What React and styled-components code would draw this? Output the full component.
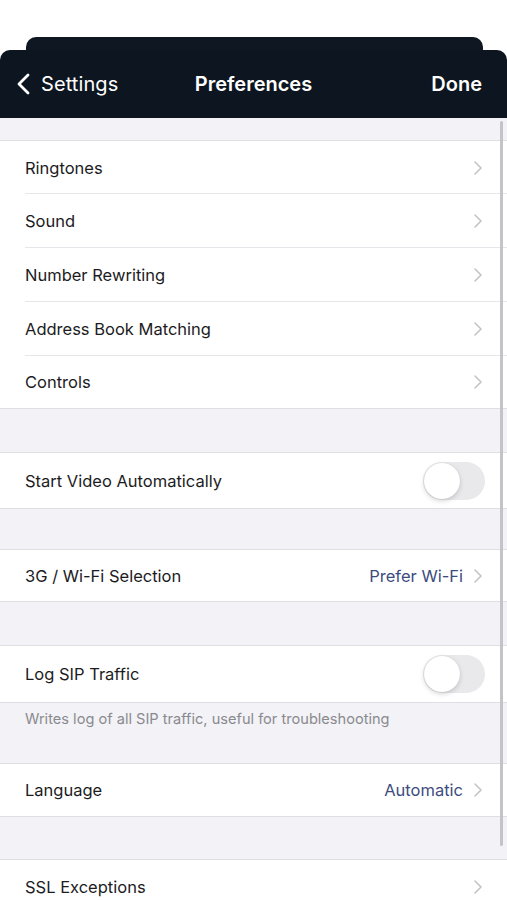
import React from 'react';
import styled, { createGlobalStyle } from 'styled-components';

const GlobalStyle = createGlobalStyle`
  html, body {
    margin: 0;
    padding: 0;
    background: #ffffff;
    font-family: Inter, "Noto Sans", sans-serif;
    -webkit-font-smoothing: antialiased;
  }
`;

const Screen = styled.div`
  position: relative;
  width: 507px;
  height: 900px;
  overflow: hidden;
  padding-top: 37px;
  box-sizing: border-box;
  background: #ffffff;
`;

const BackCard = styled.div`
  height: 13px;
  margin: 0 24px 0 26px;
  background: #0f1822;
  border-radius: 10px 10px 0 0;
`;

const Sheet = styled.div`
  background: #f2f2f7;
  border-radius: 10px 10px 0 0;
  overflow: hidden;
  height: 863px;
`;

const NavBar = styled.header`
  height: 68px;
  background: #0d1620;
  display: grid;
  grid-template-columns: 1fr auto 1fr;
  align-items: center;
  padding: 0 25px;
  color: #ffffff;
  font-size: 20px;
`;

const BackButton = styled.div`
  display: flex;
  align-items: center;
  gap: 11px;
  margin-left: -8px;
  letter-spacing: 0.1px;
`;

const Title = styled.div`
  font-weight: 600;
`;

const DoneButton = styled.div`
  justify-self: end;
  font-weight: 600;
`;

const Content = styled.div`
  padding-top: 22px;
`;

const Group = styled.div`
  background: #ffffff;
  border-top: 1px solid #dedee3;
  border-bottom: 1px solid #dedee3;
  margin-bottom: ${(p) => p.$gap ?? 43}px;
`;

const Row = styled.div`
  display: flex;
  align-items: center;
  height: ${(p) => p.$h || 53}px;
  padding-left: 25px;
  position: relative;
  &:not(:last-child)::after {
    content: '';
    position: absolute;
    left: 25px;
    right: 0;
    bottom: 0;
    height: 1px;
    background: #e5e5ea;
  }
`;

const Label = styled.div`
  flex: 1;
  font-size: 16.5px;
  color: #1c1c1e;
`;

const Value = styled.div`
  font-size: 16.5px;
  color: #3d4c80;
  margin-right: 11px;
`;

const Chevron = styled.svg`
  width: 8px;
  height: 14px;
  margin-right: 25px;
`;

const Toggle = styled.div`
  width: 62px;
  height: 38px;
  border-radius: 19px;
  background: #e9e9eb;
  margin-right: 22px;
  position: relative;
  &::after {
    content: '';
    position: absolute;
    left: 1px;
    top: 1px;
    width: 36px;
    height: 36px;
    border-radius: 50%;
    background: #ffffff;
    box-shadow: 0 2px 5px rgba(0, 0, 0, 0.16), 0 0 1px rgba(0, 0, 0, 0.12);
  }
`;

const Footer = styled.div`
  font-size: 14.6px;
  color: #8a8a8e;
  padding: 7px 25px 0;
  height: 60px;
  box-sizing: border-box;
`;

const ScrollIndicator = styled.div`
  position: absolute;
  right: 4px;
  top: 121px;
  width: 3px;
  height: 725px;
  border-radius: 2px;
  background: #c4c4c8;
`;

function Arrow() {
  return (
    <Chevron viewBox="0 0 8 14">
      <path d="M1 1l6 6-6 6" fill="none" stroke="#c4c4c7" strokeWidth="1.6" strokeLinecap="round" strokeLinejoin="round" />
    </Chevron>
  );
}

function LinkRow({ label, value, h }) {
  return (
    <Row $h={h}>
      <Label>{label}</Label>
      {value && <Value>{value}</Value>}
      <Arrow />
    </Row>
  );
}

function SwitchRow({ label, h }) {
  return (
    <Row $h={h}>
      <Label>{label}</Label>
      <Toggle />
    </Row>
  );
}

export default function App() {
  return (
    <>
      <GlobalStyle />
      <Screen>
        <BackCard />
        <Sheet>
          <NavBar>
            <BackButton>
              <svg width="13" height="22" viewBox="0 0 13 22">
                <path d="M11 2L2 11l9 9" fill="none" stroke="#fff" strokeWidth="2.8" strokeLinecap="round" strokeLinejoin="round" />
              </svg>
              Settings
            </BackButton>
            <Title>Preferences</Title>
            <DoneButton>Done</DoneButton>
          </NavBar>
          <Content>
            <Group $gap={43}>
              <LinkRow label="Ringtones" h={53} />
              <LinkRow label="Sound" h={54} />
              <LinkRow label="Number Rewriting" h={54} />
              <LinkRow label="Address Book Matching" h={54} />
              <LinkRow label="Controls" h={52} />
            </Group>
            <Group $gap={40}>
              <SwitchRow label="Start Video Automatically" h={55} />
            </Group>
            <Group $gap={43}>
              <LinkRow label="3G / Wi-Fi Selection" value="Prefer Wi-Fi" h={51} />
            </Group>
            <Group $gap={0}>
              <SwitchRow label="Log SIP Traffic" h={56} />
            </Group>
            <Footer>Writes log of all SIP traffic, useful for troubleshooting</Footer>
            <Group $gap={42}>
              <LinkRow label="Language" value="Automatic" h={52} />
            </Group>
            <Group>
              <LinkRow label="SSL Exceptions" h={53} />
            </Group>
          </Content>
        </Sheet>
        <ScrollIndicator />
      </Screen>
    </>
  );
}
